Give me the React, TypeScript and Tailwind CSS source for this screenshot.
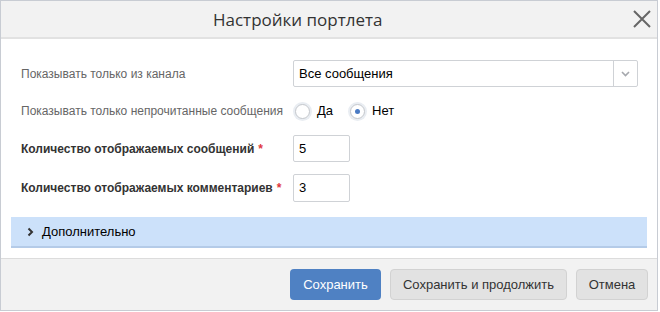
import React from "react";

const Radio = ({ checked, label }: { checked?: boolean; label: string }) => (
	<label className="flex items-center gap-[5px] cursor-pointer">
		<span className="w-[19px] h-[19px] rounded-full bg-[#e9edf2] flex items-center justify-center">
			<span className="w-[15px] h-[15px] rounded-full bg-white border border-[#c4c7cc] flex items-center justify-center">
				{checked && <span className="w-[5px] h-[5px] rounded-full bg-[#4a7bc4]" />}
			</span>
		</span>
		<span className="text-[13px] text-black">{label}</span>
	</label>
);

const Row = ({ label, bold, children, className }: { label: string; bold?: boolean; children: React.ReactNode; className?: string }) => (
	<div className={`flex items-center ${className}`}>
		<div className={`w-[282px] shrink-0 pl-[10px] text-[12px] ${bold ? "font-bold text-[#333]" : "text-[#666]"}`}>
			{label}
			{bold && <span className="text-[#e0383e] ml-[4px]">*</span>}
		</div>
		{children}
	</div>
);

export default function App() {
	return (
		<div className="w-[658px] h-[311px] border border-[#c8ccd3] bg-white flex flex-col font-['Liberation_Sans',Arial,sans-serif]">
			<div className="h-[38px] shrink-0 bg-[#f2f2f2] border-b-2 border-[#e2e2e2] flex items-center relative">
				<h3 className="pl-[212px] text-[17px] text-[#333] font-['Open_Sans',sans-serif] leading-none">Настройки портлета</h3>
				<button className="absolute right-[6px] top-[9px] w-[18px] h-[18px] flex items-center justify-center">
					<svg width="18" height="18" viewBox="0 0 18 18">
						<path d="M1 1L17 17M17 1L1 17" stroke="#666" strokeWidth="2" fill="none" />
					</svg>
				</button>
			</div>

			<div className="flex-1 px-[10px] flex flex-col">
				<Row label="Показывать только из канала" className="mt-[21px] h-[27px]">
					<div className="w-[345px] h-[27px] border border-[#cfd2d6] rounded-[2px] flex items-center">
						<span className="flex-1 pl-[5px] text-[13px] text-black">Все сообщения</span>
						<span className="w-[24px] h-full border-l border-[#cfd2d6] flex items-center justify-center">
							<svg width="9" height="6" viewBox="0 0 9 6">
								<path d="M1 1L4.5 4.5L8 1" stroke="#a5a8ad" strokeWidth="1.6" fill="none" />
							</svg>
						</span>
					</div>
				</Row>
				<Row label="Показывать только непрочитанные сообщения" className="mt-[11px] h-[26px]">
					<div className="flex items-center gap-[15px]">
						<Radio label="Да" />
						<Radio label="Нет" checked />
					</div>
				</Row>
				<Row label="Количество отображаемых сообщений" bold className="mt-[11px] h-[27px]">
					<div className="w-[57px] h-[27px] border border-[#cfd2d6] rounded-[2px] pl-[5px] flex items-center text-[13px] text-black">5</div>
				</Row>
				<Row label="Количество отображаемых комментариев" bold className="mt-[12px] h-[28px]">
					<div className="w-[57px] h-[28px] border border-[#cfd2d6] rounded-[2px] pl-[5px] flex items-center text-[13px] text-black">3</div>
				</Row>
				<div className="mt-[15px] h-[31px] bg-[#cce1fa] border-b-2 border-[#b4cbe8] flex items-center pl-[16px] gap-[8px]">
					<svg width="7" height="10" viewBox="0 0 7 10">
						<path d="M1.5 1.5L5 5L1.5 8.5" stroke="#333" strokeWidth="2" fill="none" />
					</svg>
					<span className="text-[13px] text-black">Дополнительно</span>
				</div>
			</div>

			<div className="h-[52px] shrink-0 bg-[#f2f2f2] border-t border-[#dcdcdc] flex items-center justify-end gap-[9px] pr-[9px]">
				<button className="h-[31px] w-[91px] rounded-[4px] bg-[#4f81c3] text-white text-[13px]">Сохранить</button>
				<button className="h-[31px] w-[177px] rounded-[4px] bg-[#e2e2e2] border border-[#d2d2d2] text-[#333] text-[13px]">Сохранить и продолжить</button>
				<button className="h-[31px] w-[72px] rounded-[4px] bg-[#e2e2e2] border border-[#d2d2d2] text-[#333] text-[13px]">Отмена</button>
			</div>
		</div>
	);
}
